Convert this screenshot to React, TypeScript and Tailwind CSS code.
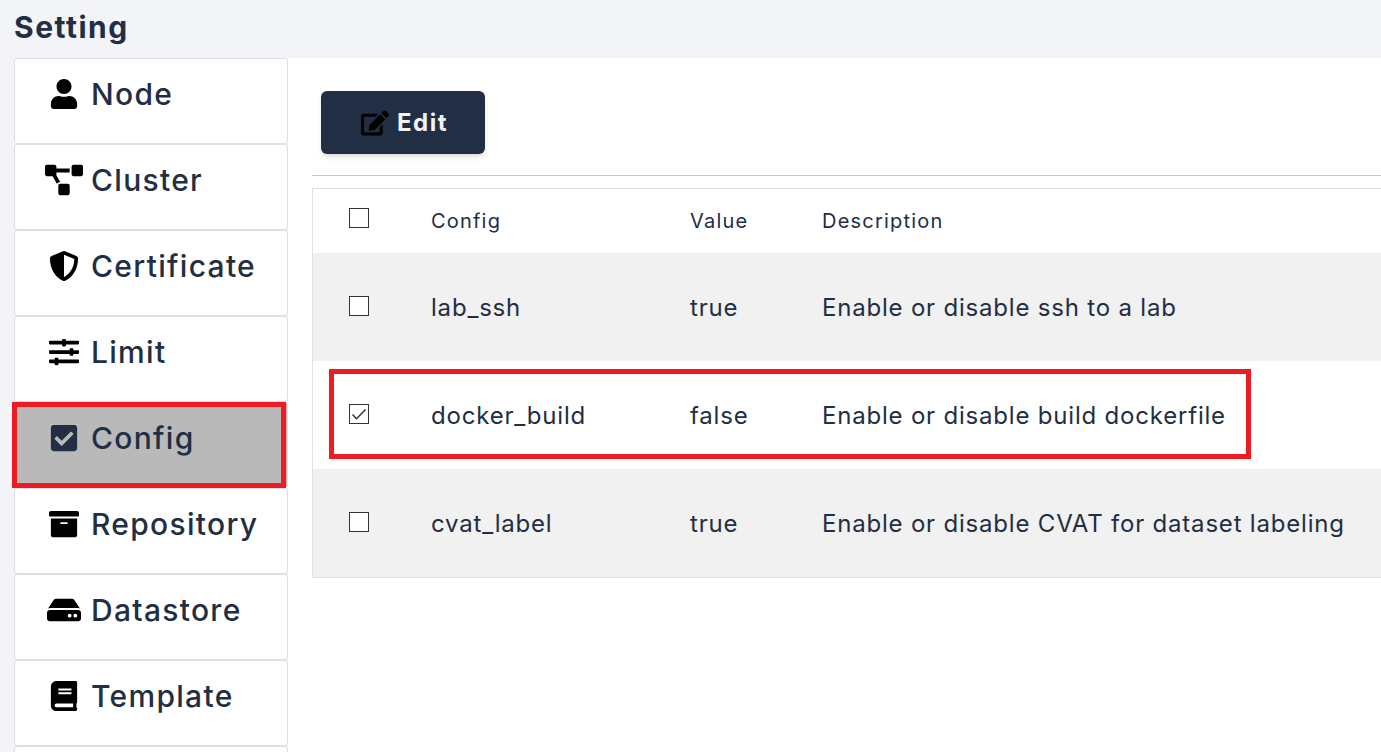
import React from "react";
import { FaUser, FaProjectDiagram, FaShieldAlt, FaSlidersH, FaCheckSquare, FaArchive, FaHdd, FaBook, FaEdit } from "react-icons/fa";

const nav = [
  { label: "Node", Icon: FaUser, size: 30 },
  { label: "Cluster", Icon: FaProjectDiagram, size: 38 },
  { label: "Certificate", Icon: FaShieldAlt, size: 30 },
  { label: "Limit", Icon: FaSlidersH, size: 30 },
  { label: "Config", Icon: FaCheckSquare, size: 30, active: true },
  { label: "Repository", Icon: FaArchive, size: 30 },
  { label: "Datastore", Icon: FaHdd, size: 34 },
  { label: "Template", Icon: FaBook, size: 30 },
];

const rows = [
  { c: "lab_ssh", v: "true", d: "Enable or disable ssh to a lab" },
  { c: "docker_build", v: "false", d: "Enable or disable build dockerfile", checked: true },
  { c: "cvat_label", v: "true", d: "Enable or disable CVAT for dataset labeling" },
];

function Box({ checked }: { checked?: boolean }) {
  return (
    <span className="block w-5 h-5 border border-[#333333] bg-white">
      {checked && (
        <svg viewBox="0 0 18 18" className="w-full h-full" fill="none" stroke="#333333" strokeWidth="1.5">
          <path d="M2.5 9.5l4 4.2L15.5 4.5" />
        </svg>
      )}
    </span>
  );
}

export default function App() {
  return (
    <div className="h-[752px] w-[1381px] overflow-hidden bg-[#f3f4f8] text-[#222e44] font-['Inter','Liberation_Sans',sans-serif]">
      <div className="h-[58px] pl-[14px] pt-[7px] text-[30px] leading-[40px] font-bold tracking-[1.5px]">Setting</div>
      <div className="flex items-start">
        <aside className="w-[274px] ml-[14px] shrink-0 flex flex-col">
          {nav.map(({ label, Icon, size, active }) => (
            <div
              key={label}
              className={`relative h-[86px] rounded-[3px] border border-[#dfdfe3] flex items-start pt-[15px] ${active ? "bg-[#b9b9b9]" : "bg-white"}`}
            >
              <span className="w-[76px] h-[40px] shrink-0 flex items-center justify-center pl-[22px] text-black">
                <Icon size={size} className={active ? "text-[#222e44]" : ""} />
              </span>
              <span className="text-[30px] leading-[40px] font-medium tracking-[1.3px]">{label}</span>
              {active && <span className="absolute -left-[3px] -top-[1px] w-[274px] h-[86px] border-[5px] border-[#ed1c24]" />}
            </div>
          ))}
          <div className="h-[86px] rounded-[3px] border border-[#dfdfe3] bg-white" />
        </aside>
        <main className="flex-1 h-[694px] bg-white">
          <div className="pl-[33px] pt-[33px]">
            <button className="w-[164px] h-[63px] rounded-[6px] bg-[#222e44] shadow-md flex items-center pl-[40px] gap-[8px] text-[#f1f3f8] text-[24px] font-bold tracking-[1.5px]">
              <FaEdit size={28} className="text-black" />
              Edit
            </button>
          </div>
          <div className="ml-[24px] mt-[21px] h-px bg-[#c5c6d6]" />
          <div className="relative ml-[24px] mt-[12px] border border-r-0 border-[#e1e1e3]">
            <div className="flex items-center h-[64px] text-[20px] tracking-[1.2px]">
              <span className="w-[36px] shrink-0" />
              <span className="w-[82px] shrink-0 pb-[6px]"><Box /></span>
              <span className="w-[259px] shrink-0">Config</span>
              <span className="w-[132px] shrink-0">Value</span>
              <span>Description</span>
            </div>
            {rows.map((r, i) => (
              <div key={r.c} className={`flex items-center h-[108px] pt-[2px] text-[24px] tracking-[0.8px] ${i % 2 === 0 ? "bg-[#f1f1f1]" : "bg-white"}`}>
                <span className="w-[36px] shrink-0" />
                <span className="w-[82px] shrink-0 pb-[4px]"><Box checked={r.checked} /></span>
                <span className="w-[259px] shrink-0">{r.c}</span>
                <span className="w-[132px] shrink-0">{r.v}</span>
                <span>{r.d}</span>
              </div>
            ))}
            <span className="absolute left-[16px] top-[180px] w-[922px] h-[90px] border-[5px] border-[#ed1c24]" />
          </div>
        </main>
      </div>
    </div>
  );
}
